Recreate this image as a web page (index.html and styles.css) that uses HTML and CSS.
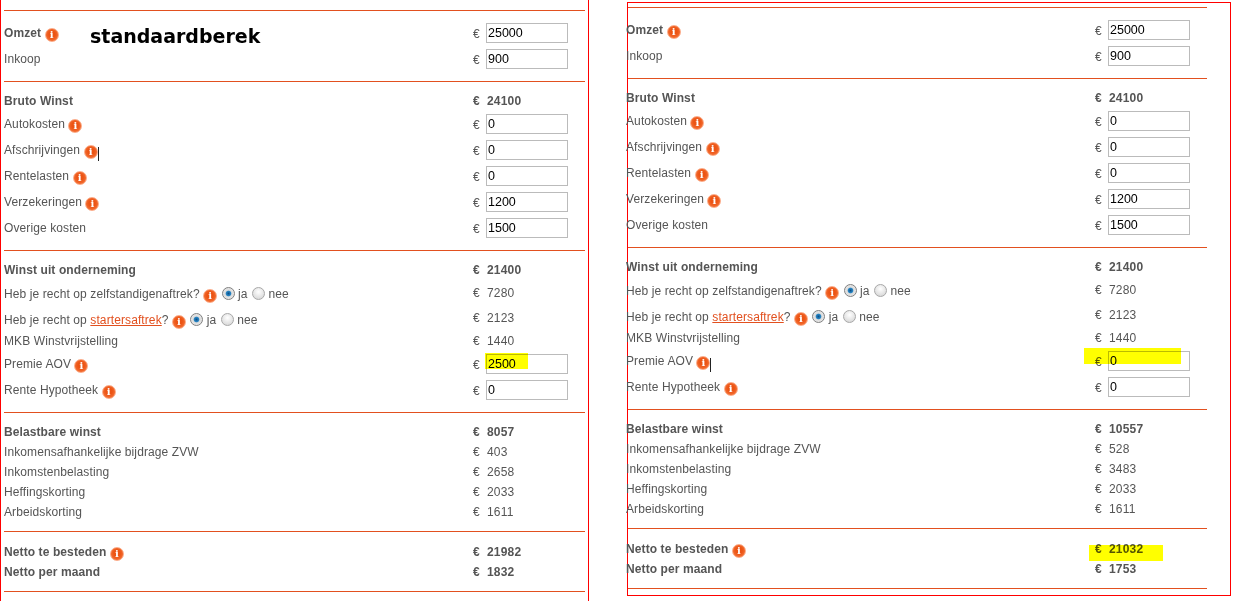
FILE: index.html
```html
<!DOCTYPE html>
<html lang="nl">
<head>
  <meta charset="UTF-8" />
  <title>Netto berekening</title>
  <link rel="stylesheet" href="styles.css">
</head>
<body>

  <div class="pagina">

    <!-- standaardberekening -->
    <div class="paneel paneel-links">
      <div class="titel">standaardberek</div>
      <div class="marker marker-premie"></div>
      <div class="regels">
        <div class="blok">
          <div class="rij hoog"><div class="label"><b>Omzet</b> <span class="info">i</span></div><div class="euro">€</div><input class="veld" value="25000"></div>
          <div class="rij hoog"><div class="label">Inkoop</div><div class="euro">€</div><input class="veld" value="900"></div>
        </div>
        <div class="blok">
          <div class="rij vet"><div class="label">Bruto Winst</div><div class="euro">€</div><div class="bedrag">24100</div></div>
          <div class="rij hoog"><div class="label">Autokosten <span class="info">i</span></div><div class="euro">€</div><input class="veld" value="0"></div>
          <div class="rij hoog"><div class="label">Afschrijvingen <span class="info">i</span><span class="cursor"></span></div><div class="euro">€</div><input class="veld" value="0"></div>
          <div class="rij hoog"><div class="label">Rentelasten <span class="info">i</span></div><div class="euro">€</div><input class="veld" value="0"></div>
          <div class="rij hoog"><div class="label">Verzekeringen <span class="info">i</span></div><div class="euro">€</div><input class="veld" value="1200"></div>
          <div class="rij hoog"><div class="label">Overige kosten</div><div class="euro">€</div><input class="veld" value="1500"></div>
        </div>
        <div class="blok">
          <div class="rij vet"><div class="label">Winst uit onderneming</div><div class="euro">€</div><div class="bedrag">21400</div></div>
          <div class="rij keuzerij kort"><div class="label">Heb je recht op zelfstandigenaftrek? <span class="info">i</span> <input type="radio" class="keuze" name="a1" checked> ja <input type="radio" class="keuze" name="a1"> nee</div><div class="euro">€</div><div class="bedrag">7280</div></div>
          <div class="rij keuzerij"><div class="label">Heb je recht op <a href="#">startersaftrek</a>? <span class="info">i</span> <input type="radio" class="keuze" name="a2" checked> ja <input type="radio" class="keuze" name="a2"> nee</div><div class="euro">€</div><div class="bedrag">2123</div></div>
          <div class="rij"><div class="label">MKB Winstvrijstelling</div><div class="euro">€</div><div class="bedrag">1440</div></div>
          <div class="rij hoog"><div class="label">Premie AOV <span class="info">i</span></div><div class="euro">€</div><input class="veld" value="2500"></div>
          <div class="rij hoog"><div class="label">Rente Hypotheek <span class="info">i</span></div><div class="euro">€</div><input class="veld" value="0"></div>
        </div>
        <div class="blok">
          <div class="rij vet"><div class="label">Belastbare winst</div><div class="euro">€</div><div class="bedrag">8057</div></div>
          <div class="rij"><div class="label">Inkomensafhankelijke bijdrage ZVW</div><div class="euro">€</div><div class="bedrag">403</div></div>
          <div class="rij"><div class="label">Inkomstenbelasting</div><div class="euro">€</div><div class="bedrag">2658</div></div>
          <div class="rij"><div class="label">Heffingskorting</div><div class="euro">€</div><div class="bedrag">2033</div></div>
          <div class="rij"><div class="label">Arbeidskorting</div><div class="euro">€</div><div class="bedrag">1611</div></div>
        </div>
        <div class="blok">
          <div class="rij vet netto"><div class="label">Netto te besteden <span class="info">i</span></div><div class="euro">€</div><div class="bedrag">21982</div></div>
          <div class="rij vet"><div class="label">Netto per maand</div><div class="euro">€</div><div class="bedrag">1832</div></div>
        </div>
      </div>
    </div>

    <!-- berekening zonder AOV -->
    <div class="paneel paneel-rechts">
      <div class="marker marker-aov"></div>
      <div class="marker marker-netto"></div>
      <div class="regels">
        <div class="blok">
          <div class="rij hoog"><div class="label"><b>Omzet</b> <span class="info">i</span></div><div class="euro">€</div><input class="veld" value="25000"></div>
          <div class="rij hoog"><div class="label">Inkoop</div><div class="euro">€</div><input class="veld" value="900"></div>
        </div>
        <div class="blok">
          <div class="rij vet"><div class="label">Bruto Winst</div><div class="euro">€</div><div class="bedrag">24100</div></div>
          <div class="rij hoog"><div class="label">Autokosten <span class="info">i</span></div><div class="euro">€</div><input class="veld" value="0"></div>
          <div class="rij hoog"><div class="label">Afschrijvingen <span class="info">i</span></div><div class="euro">€</div><input class="veld" value="0"></div>
          <div class="rij hoog"><div class="label">Rentelasten <span class="info">i</span></div><div class="euro">€</div><input class="veld" value="0"></div>
          <div class="rij hoog"><div class="label">Verzekeringen <span class="info">i</span></div><div class="euro">€</div><input class="veld" value="1200"></div>
          <div class="rij hoog"><div class="label">Overige kosten</div><div class="euro">€</div><input class="veld" value="1500"></div>
        </div>
        <div class="blok">
          <div class="rij vet"><div class="label">Winst uit onderneming</div><div class="euro">€</div><div class="bedrag">21400</div></div>
          <div class="rij keuzerij kort"><div class="label">Heb je recht op zelfstandigenaftrek? <span class="info">i</span> <input type="radio" class="keuze" name="b1" checked> ja <input type="radio" class="keuze" name="b1"> nee</div><div class="euro">€</div><div class="bedrag">7280</div></div>
          <div class="rij keuzerij"><div class="label">Heb je recht op <a href="#">startersaftrek</a>? <span class="info">i</span> <input type="radio" class="keuze" name="b2" checked> ja <input type="radio" class="keuze" name="b2"> nee</div><div class="euro">€</div><div class="bedrag">2123</div></div>
          <div class="rij"><div class="label">MKB Winstvrijstelling</div><div class="euro">€</div><div class="bedrag">1440</div></div>
          <div class="rij hoog"><div class="label">Premie AOV <span class="info">i</span><span class="cursor"></span></div><div class="euro">€</div><input class="veld" value="0"></div>
          <div class="rij hoog"><div class="label">Rente Hypotheek <span class="info">i</span></div><div class="euro">€</div><input class="veld" value="0"></div>
        </div>
        <div class="blok">
          <div class="rij vet"><div class="label">Belastbare winst</div><div class="euro">€</div><div class="bedrag">10557</div></div>
          <div class="rij"><div class="label">Inkomensafhankelijke bijdrage ZVW</div><div class="euro">€</div><div class="bedrag">528</div></div>
          <div class="rij"><div class="label">Inkomstenbelasting</div><div class="euro">€</div><div class="bedrag">3483</div></div>
          <div class="rij"><div class="label">Heffingskorting</div><div class="euro">€</div><div class="bedrag">2033</div></div>
          <div class="rij"><div class="label">Arbeidskorting</div><div class="euro">€</div><div class="bedrag">1611</div></div>
        </div>
        <div class="blok">
          <div class="rij vet netto"><div class="label">Netto te besteden <span class="info">i</span></div><div class="euro">€</div><div class="bedrag">21032</div></div>
          <div class="rij vet"><div class="label">Netto per maand</div><div class="euro">€</div><div class="bedrag">1753</div></div>
        </div>
      </div>
    </div>

  </div>

</body>
</html>
```

FILE: styles.css
```css
body {
  font-family: "Liberation Sans", Arial, sans-serif;
  font-size: 12px;
  color: #555;
  margin: 0;
  background-color: white;
}

.pagina {
  display: flex;
  align-items: flex-start;
  height: 601px;
  overflow: hidden;
}

.paneel {
  position: relative;
  border: 1px solid #f00;
  box-sizing: border-box;
}

.paneel-links {
  width: 589px;
  height: 620px;
  margin-top: -1px;
  padding: 10px 3px 0 3px;
}

.paneel-rechts {
  width: 604px;
  height: 594px;
  margin-top: 2px;
  margin-left: 38px;
  padding: 4px 23px 0 0;
}

.blok {
  border-top: 1px solid #e2501f;
  padding: 9px 0;
}

.blok:last-child {
  border-bottom: 1px solid #e2501f;
}

.rij {
  display: flex;
  align-items: center;
  height: 20px;
}

.rij.hoog,
.rij.keuzerij {
  height: 26px;
}

.rij.keuzerij.kort {
  height: 25px;
}

.rij.netto {
  height: 21px;
}

.rij.keuzerij .label {
  padding-top: 3px;
}

.rij.vet {
  font-weight: bold;
}

.label {
  width: 469px;
  white-space: nowrap;
  letter-spacing: 0.1px;
}

.paneel-rechts .label {
  margin-left: -2px;
}

.euro {
  width: 13px;
}

.hoog .euro {
  padding-top: 2px;
}

.bedrag {
  padding-left: 1px;
  letter-spacing: 0.2px;
}

.veld {
  width: 82px;
  height: 20px;
  box-sizing: border-box;
  border: 1px solid #bbb;
  padding: 0 1px;
  font-family: "Liberation Sans", Arial, sans-serif;
  font-size: 12.5px;
  color: #000;
  background: white;
}

.info {
  display: inline-block;
  box-sizing: border-box;
  width: 14px;
  height: 14px;
  margin: -3px 0;
  border: 1px solid #fbab88;
  border-radius: 50%;
  background: radial-gradient(circle at 50% 45%, #ec5414 35%, #f98048 100%);
  color: white;
  font-family: "DejaVu Serif", serif;
  font-size: 10px;
  font-weight: bold;
  line-height: 12px;
  text-align: center;
  vertical-align: -1px;
  letter-spacing: 0;
}

.keuze {
  appearance: none;
  box-sizing: border-box;
  width: 13px;
  height: 13px;
  margin: -3px 0 -3px 1px;
  border: 1px solid #a8a8a8;
  border-radius: 50%;
  background: radial-gradient(circle at 50% 35%, #fff, #d0d0d0);
  vertical-align: 1px;
}

.keuze:checked {
  border-color: #808080;
  background: radial-gradient(circle, #0b4f88 0, #2a86c4 30%, #dcdcdc 42%, #f0f0f0 100%);
}

a {
  color: #e2501f;
}

.cursor {
  display: inline-block;
  width: 1px;
  height: 14px;
  margin: -3px 0;
  background: #222;
  vertical-align: -4px;
}

.titel {
  position: absolute;
  left: 89px;
  top: 25px;
  font-family: "DejaVu Sans", sans-serif;
  font-size: 19px;
  font-weight: bold;
  color: #000;
}

.marker {
  position: absolute;
  z-index: 1;
  background: #ff0;
  mix-blend-mode: multiply;
}

.marker-premie {
  left: 484px;
  top: 353px;
  width: 43px;
  height: 16px;
}

.marker-aov {
  left: 456px;
  top: 345px;
  width: 97px;
  height: 16px;
}

.marker-netto {
  left: 461px;
  top: 542px;
  width: 74px;
  height: 16px;
}
```
